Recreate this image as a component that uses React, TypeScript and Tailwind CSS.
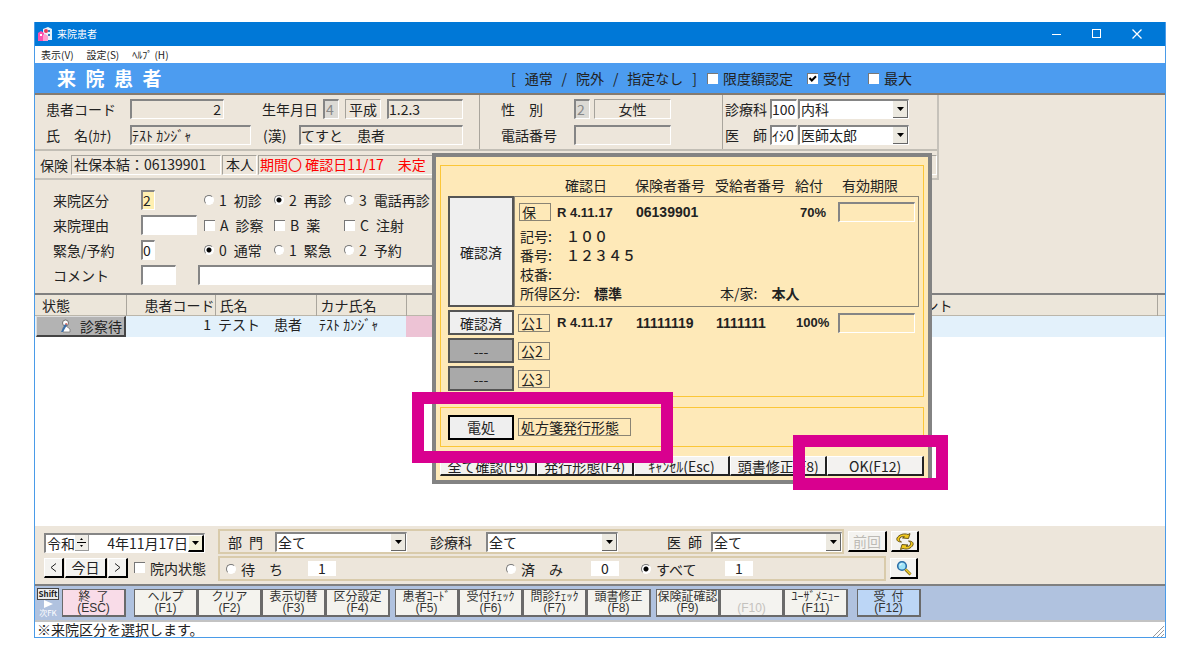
import { useState, type ReactNode } from "react";
import { clsx } from "clsx";

const sunken = "border-t-2 border-l-2 border-r border-b border-t-[#858585] border-l-[#858585] border-r-white border-b-white";
const flat = "border border-t-[#a5a29b] border-l-[#a5a29b] border-r-white border-b-white";
const raised = "border-t border-l border-r-2 border-b-2 border-t-white border-l-white border-r-black border-b-black";

const radioClass =
  "h-[10px] w-[10px] shrink-0 appearance-none rounded-full border border-t-[#777] border-l-[#777] border-r-white border-b-white bg-white checked:bg-[radial-gradient(circle,#000_2px,#fff_3px)]";

interface FieldProps {
  label?: string;
  value?: string;
  className?: string;
  id?: string;
  thin?: boolean;
}

function Field({ label, value, className, id, thin }: FieldProps) {
  return (
    <input
      id={id}
      aria-label={label}
      defaultValue={value}
      className={clsx("h-5 min-w-0 shrink-0 rounded-none pb-px outline-none", thin ? flat : sunken, className)}
    />
  );
}

function Select({ label, options, className }: { label: string; options: string[]; className?: string }) {
  return (
    <div className={clsx("relative h-5 shrink-0 bg-white", sunken, className)}>
      <select aria-label={label} className="block h-full w-full appearance-none bg-transparent pl-px leading-[17px] outline-none">
        {options.map((o) => (
          <option key={o}>{o}</option>
        ))}
      </select>
      <span className="pointer-events-none absolute top-0 right-0 flex h-full w-[15px] items-center justify-center border-r border-b border-[#666] bg-[#ece9e0]">
        <svg width="7" height="4" viewBox="0 0 7 4">
          <path d="M0 0h7L3.5 4z" fill="#000" />
        </svg>
      </span>
    </div>
  );
}

function Check({ label, checked, className }: { label: string; checked?: boolean; className?: string }) {
  return (
    <label className={clsx("flex shrink-0 items-center gap-[5px] whitespace-nowrap", className)}>
      <span className="relative h-[11px] w-[11px] shrink-0">
        <input
          type="checkbox"
          defaultChecked={checked}
          className="peer block h-[11px] w-[11px] appearance-none border-t border-l border-t-[#777] border-l-[#777] bg-white"
        />
        <svg
          className="pointer-events-none absolute inset-0 hidden peer-checked:block"
          width="11"
          height="11"
          viewBox="0 0 11 11"
          fill="none"
          stroke="#000"
          strokeWidth="2"
        >
          <path d="M2.5 5l2.3 2.5L9 3.2" />
        </svg>
      </span>
      {label}
    </label>
  );
}

function Radio({ name, label, checked, className }: { name: string; label: string; checked?: boolean; className?: string }) {
  return (
    <label className={clsx("flex shrink-0 items-center gap-[5px] whitespace-nowrap", className)}>
      <input type="radio" name={name} defaultChecked={checked} className={radioClass} />
      {label}
    </label>
  );
}

function RaisedButton({ children, className, label }: { children: ReactNode; className?: string; label?: string }) {
  return (
    <button aria-label={label} className={clsx("flex shrink-0 items-center justify-center bg-[#f4f3f0] whitespace-nowrap", raised, className)}>
      {children}
    </button>
  );
}

/* ── Title bar, menu and banner ── */
const modes = ["[", "通常", "/", "院外", "/", "指定なし", "]"];

function TitleBar() {
  return (
    <header>
      <div className="flex h-6 items-center bg-[#0078d7] pr-2 pl-[3px] text-white">
        <svg width="15" height="14" viewBox="0 0 15 14">
          <path d="M5 2l5-2 4 2v11H5z" fill="#e8f4fb" />
          <path d="M10 3h2v2h-2zM10 7h2v2h-2z" fill="#3d7fb8" />
          <circle cx="8" cy="4" r="2" fill="#e8385a" />
          <path d="M0 6l3-2 3 2v8H0z" fill="#ff4fae" />
          <path d="M5 8l2-1 3 2v5H5z" fill="#ff9fd0" />
          <path d="M2 7h2v2H2z" fill="#fff" />
        </svg>
        <h1 className="ml-1 text-[10px]">来院患者</h1>
        <div className="ml-auto flex">
          <button aria-label="最小化" className="flex h-6 w-10 items-center justify-center">
            <svg width="10" height="10" stroke="#fff">
              <path d="M0 5.5h9" />
            </svg>
          </button>
          <button aria-label="最大化" className="flex h-6 w-10 items-center justify-center">
            <svg width="10" height="10" stroke="#fff" fill="none">
              <rect x=".5" y=".5" width="8" height="8" />
            </svg>
          </button>
          <button aria-label="閉じる" className="flex h-6 w-10 items-center justify-center">
            <svg width="10" height="10" stroke="#fff" strokeWidth="1.3">
              <path d="M.5 .5l9 9M9.5 .5l-9 9" />
            </svg>
          </button>
        </div>
      </div>
      <nav className="flex h-[17px] items-center gap-[13px] bg-white pl-[6px] text-[10px]">
        <button>表示(V)</button>
        <button>設定(S)</button>
        <button>ﾍﾙﾌﾟ (H)</button>
      </nav>
      <div className="flex h-8 items-center border-b-2 border-[#857b70] bg-[#4c9cf0]">
        <h2 className="w-[476px] pl-[22px] text-[19px] font-bold text-white">来&ensp;院&ensp;患&ensp;者</h2>
        <p className="mr-[10px] flex w-[186px] shrink-0 justify-between">
          {modes.map((m, i) => (
            <span key={i}>{m}</span>
          ))}
        </p>
        <Check label="限度額認定" className="w-[100px]" />
        <Check label="受付" checked className="w-[61px]" />
        <Check label="最大" />
      </div>
    </header>
  );
}

/* ── Patient summary ── */
function PatientPanel() {
  return (
    <section className="max-w-[904px] border-r-2 border-b-2 border-[#c6c2ba]">
      <div className="flex h-[56px] border-b-2 border-[#c2beb5]">
        <div className="flex w-[445px] flex-col justify-center gap-[6px] border-r border-[#a9a59d] pl-[11px]">
          <div className="flex items-center">
            <label htmlFor="code" className="w-[84px]">患者コード</label>
            <Field id="code" value="2" className="mr-[38px] w-[94px] pr-[2px] text-right" />
            <label htmlFor="birth" className="w-[61px]">生年月日</label>
            <Field label="元号コード" value="4" className="mr-[6px] w-4 bg-[#dcdad5] pl-px text-[#888]" />
            <Field label="元号" value="平成" thin className="mr-[6px] w-[36px] pl-[3px]" />
            <Field id="birth" value="1.2.3" className="w-[76px]" />
          </div>
          <div className="flex items-center">
            <label htmlFor="kana" className="w-[84px]">氏　名(ｶﾅ)</label>
            <Field id="kana" value="ﾃｽﾄ ｶﾝｼﾞｬ" className="mr-3 w-[121px]" />
            <label htmlFor="kanji" className="w-[36px]">(漢)</label>
            <Field id="kanji" value="てすと　患者" className="w-[164px]" />
          </div>
        </div>
        <div className="flex w-[243px] flex-col justify-center gap-[6px] border-r border-[#a9a59d] pl-[21px]">
          <div className="flex items-center">
            <label htmlFor="sex" className="w-[73px]">性　別</label>
            <Field label="性別コード" value="2" className="mr-1 w-4 bg-[#dcdad5] pl-px text-[#888]" />
            <Field id="sex" value="女性" thin className="w-[77px] text-center" />
          </div>
          <div className="flex items-center">
            <label htmlFor="tel" className="w-[73px]">電話番号</label>
            <Field id="tel" className="w-[97px]" />
          </div>
        </div>
        <div className="flex flex-col justify-center gap-[6px] pl-[2px]">
          <div className="flex items-center">
            <label htmlFor="dept" className="w-[45px]">診療科</label>
            <Field id="dept" value="100" className="mr-px w-[27px] bg-white" />
            <Select label="診療科" options={["内科"]} className="w-[111px]" />
          </div>
          <div className="flex items-center">
            <label htmlFor="doctor" className="w-[45px]">医　師</label>
            <Field id="doctor" value="ｲｼ0" className="mr-px w-[27px] bg-white" />
            <Select label="医師" options={["医師太郎"]} className="w-[111px]" />
          </div>
        </div>
      </div>
      <div className="flex h-[27px] items-center gap-px pl-[5px]">
        <label htmlFor="ins" className="w-[30px]">保険</label>
        <Field id="ins" value="社保本結：06139901" thin className="w-[150px] pl-[2px]" />
        <Field label="本人" value="本人" thin className="w-[35px] pl-[3px]" />
        <Field label="期間" value="期間〇 確認日11/17&#8195;未定" thin className="flex-1 pl-px text-[#ff0000]" />
      </div>
    </section>
  );
}

/* ── Visit form ── */
function VisitForm() {
  return (
    <section className="flex flex-col gap-[5px] pt-[10px] pb-[8px] pl-[18px]">
      <div className="flex h-5 items-center">
        <label htmlFor="kubun" className="w-[88px]">来院区分</label>
        <Field id="kubun" value="2" className="mr-[49px] w-[14px] bg-[#ffefb0]" />
        <Radio name="kubun" label={"1\u2002初診"} className="w-[70px]" />
        <Radio name="kubun" label={"2\u2002再診"} checked className="w-[70px]" />
        <Radio name="kubun" label={"3\u2002電話再診"} />
      </div>
      <div className="flex h-5 items-center">
        <label htmlFor="riyu" className="w-[88px]">来院理由</label>
        <Field id="riyu" className="mr-[7px] w-[56px] bg-white" />
        <Check label={"A\u2002診察"} className="w-[70px]" />
        <Check label={"B\u2002薬"} className="w-[70px]" />
        <Check label={"C\u2002注射"} />
      </div>
      <div className="flex h-5 items-center">
        <label htmlFor="kinkyu" className="w-[88px]">緊急/予約</label>
        <Field id="kinkyu" value="0" className="mr-[49px] w-[14px] bg-white" />
        <Radio name="kinkyu" label={"0\u2002通常"} checked className="w-[70px]" />
        <Radio name="kinkyu" label={"1\u2002緊急"} className="w-[70px]" />
        <Radio name="kinkyu" label={"2\u2002予約"} />
      </div>
      <div className="flex h-5 items-center">
        <label htmlFor="comment" className="w-[88px]">コメント</label>
        <Field id="comment" className="mr-[22px] w-[35px] bg-white" />
        <Field label="コメント内容" className="w-[660px] bg-white" />
      </div>
    </section>
  );
}

const th = "h-[21px] border-r border-[#aaa69d] text-left font-normal";

function PatientTable() {
  return (
    <div className="flex-1 border-t-2 border-[#808080] bg-white">
      <table className="w-full table-fixed border-collapse leading-[17px]">
        <thead className="bg-[#ece6da] shadow-[inset_0_-1px_0_#bbb6aa]">
          <tr>
            <th className={clsx(th, "w-[91px] pl-[7px]")}>状態</th>
            <th className={clsx(th, "w-[89px] text-right")}>患者コード</th>
            <th className={clsx(th, "w-[101px] pl-1")}>氏名</th>
            <th className={clsx(th, "w-[90px] pl-1")}>カナ氏名</th>
            <th className={clsx(th, "w-[240px]")}></th>
            <th className={clsx(th, "w-[246px]")}></th>
            <th className={clsx(th, "pl-1")}>コメント</th>
            <th className="w-2"></th>
          </tr>
        </thead>
        <tbody className="align-top">
          <tr className="bg-[#e3f1fb]">
            <td className="h-[21px] p-0 pl-px">
              <button className="flex h-[21px] w-[90px] items-center justify-end gap-2 border-t border-l border-r-2 border-b-2 border-t-[#ddd] border-l-[#ddd] border-r-[#444] border-b-[#444] bg-[#b3b3b3] pr-[2px]">
                <svg width="14" height="14" viewBox="0 0 14 14">
                  <circle cx="7.5" cy="4" r="3" fill="#fff" stroke="#555" strokeWidth=".8" />
                  <path d="M5 13V8.5l3-1.5 4 3v3z" fill="#fff" stroke="#777" strokeWidth=".8" />
                  <path d="M3 13l4-8 2 1-4 7z" fill="#3a6ea8" />
                  <path d="M7 5l1-1 1.5 1-.5 1z" fill="#c8443a" />
                </svg>
                診察待
              </button>
            </td>
            <td className="pr-1 text-right">1</td>
            <td className="pl-[3px]">テスト　患者</td>
            <td className="pl-[3px]">ﾃｽﾄ ｶﾝｼﾞｬ</td>
            <td className="bg-[#edc3d5]"></td>
            <td></td>
            <td></td>
            <td></td>
          </tr>
        </tbody>
      </table>
    </div>
  );
}

/* ── Filter area under the table ── */
function FilterPanel() {
  const group = "flex h-[25px] items-center border-2 border-[#d9cbab]";
  return (
    <section className="flex h-[60px] shrink-0 items-center gap-[13px] border-b-2 border-[#808080] pl-[9px]">
      <div className="flex w-[161px] shrink-0 flex-col gap-[5px]">
        <div className={clsx("flex h-5 items-center bg-white pl-px", sunken)}>
          <label htmlFor="date">令和</label>
          <button aria-label="元号切替" className="flex h-4 w-[14px] flex-col items-center justify-center border-r border-b border-[#999] bg-[#f0eee8]">
            <svg width="9" height="11" viewBox="0 0 9 11">
              <path d="M3 3l1.5-2L6 3zM3 8l1.5 2L6 8zM0 5h9v1H0z" />
            </svg>
          </button>
          <input id="date" defaultValue="4年11月17日" className="min-w-0 flex-1 text-right outline-none" />
          <button aria-label="カレンダー" className={clsx("flex h-full w-4 items-center justify-center bg-[#f4f1da]", raised)}>
            <svg width="7" height="4" viewBox="0 0 7 4">
              <path d="M0 0h7L3.5 4z" fill="#000" />
            </svg>
          </button>
        </div>
        <div className="flex items-center gap-px whitespace-nowrap">
          <RaisedButton className="h-[20px] w-5" label="前日">
            <svg width="7" height="9" viewBox="0 0 7 9" fill="none" stroke="#222">
              <path d="M6 .5l-5 4 5 4" />
            </svg>
          </RaisedButton>
          <RaisedButton className="h-[20px] w-[42px]">今日</RaisedButton>
          <RaisedButton className="mr-[5px] h-[20px] w-5" label="翌日">
            <svg width="7" height="9" viewBox="0 0 7 9" fill="none" stroke="#222">
              <path d="M1 .5l5 4-5 4" />
            </svg>
          </RaisedButton>
          <Check label="院内状態" />
        </div>
      </div>
      <div className="flex flex-col gap-[2px]">
        <div className="flex items-center gap-1">
          <div className={clsx(group, "w-[626px]")}>
            <span className="w-[55px] pl-[8px]">部&ensp;門</span>
            <Select label="部門" options={["全て"]} className="w-[132px]" />
            <span className="w-[79px] pl-[23px]">診療科</span>
            <Select label="診療科絞り込み" options={["全て"]} className="w-[132px]" />
            <span className="w-[93px] pl-[49px]">医&ensp;師</span>
            <Select label="医師絞り込み" options={["全て"]} className="w-[131px]" />
          </div>
          <RaisedButton className="h-[21px] w-[39px] text-[#bcbab5]">前回</RaisedButton>
          <RaisedButton className="h-[21px] w-7" label="更新">
            <svg width="18" height="17" viewBox="0 0 18 17">
              <g fill="#f0c81e" stroke="#5b4a10" strokeWidth=".9">
                <path d="M1 5C3 1.500 8 0 12 1.500L14 .6 12.500 5.500 6.500 5l2-1.200C6 3.200 3.500 4 3.500 6.500c0 1.500 1 2 2 2.500C2 9 .2 7.500 1 5z" />
                <path d="M17 12c-2 3.500-6 5-10 3.500L4.500 16.500 6 11.500l6 .5-2 1.200c2.500.6 4.500-.2 4.500-2.700 0-1.500-1-2-2-2.500 3.500 0 5.300 1.500 4.500 4z" />
              </g>
            </svg>
          </RaisedButton>
        </div>
        <div className="flex items-center gap-1">
          <div className={clsx(group, "w-[668px]")}>
            <Radio name="list" label="待　ち" className="w-[88px] pl-[6px]" />
            <output className="h-[15px] w-7 bg-white text-center leading-[15px]">1</output>
            <Radio name="list" label="済　み" className="w-[255px] pl-[170px]" />
            <output className="h-[15px] w-7 bg-white text-center leading-[15px]">0</output>
            <Radio name="list" label="すべて" checked className="w-[106px] pl-[22px]" />
            <output className="h-[15px] w-7 bg-white text-center leading-[15px]">1</output>
          </div>
          <RaisedButton className="h-[21px] w-7" label="検索">
            <svg width="16" height="16" viewBox="0 0 16 16">
              <circle cx="6" cy="6" r="4.300" fill="#9fe3f7" stroke="#2b6fa8" strokeWidth="1.600" />
              <path d="M4 5.500C4.300 4.300 5.200 3.800 6.300 3.800" stroke="#fff" fill="none" />
              <path d="M9.500 9.500l5 5" stroke="#7a6410" strokeWidth="2.800" />
              <path d="M9.500 9.300l5 5" stroke="#f2cf2a" strokeWidth="1.400" />
            </svg>
          </RaisedButton>
        </div>
      </div>
    </section>
  );
}

interface FKeyProps {
  name: string;
  code: string;
  tone?: string;
}

const fkeys: FKeyProps[][] = [
  [
    { name: "ヘルプ", code: "(F1)" },
    { name: "クリア", code: "(F2)" },
    { name: "表示切替", code: "(F3)" },
    { name: "区分設定", code: "(F4)" },
  ],
  [
    { name: "患者ｺｰﾄﾞ", code: "(F5)" },
    { name: "受付ﾁｪｯｸ", code: "(F6)" },
    { name: "問診ﾁｪｯｸ", code: "(F7)" },
    { name: "頭書修正", code: "(F8)" },
  ],
  [
    { name: "保険証確認", code: "(F9)" },
    { name: "", code: "(F10)", tone: "bg-[#f4f3f0] text-[#c4c2be]" },
    { name: "ﾕｰｻﾞﾒﾆｭｰ", code: "(F11)" },
  ],
  [{ name: "受\u2002付", code: "(F12)", tone: "bg-[#bcd6f6]" }],
];

function FKey({ name, code, tone }: FKeyProps) {
  return (
    <button
      disabled={!name}
      className={clsx(
        "flex h-7 w-16 flex-col items-center justify-end border-t border-l border-r-2 border-b-2 border-[#6a6a6a] whitespace-nowrap",
        tone ?? "bg-[#f4f3ee]",
        name && "text-[#333]"
      )}
    >
      {name && <span>{name}</span>}
      <span className="font-['Liberation_Sans',sans-serif]">{code}</span>
    </button>
  );
}

function FunctionBar() {
  return (
    <footer className="shrink-0">
      <div className="flex h-[34px] items-center gap-[5px] bg-[#b0c2df] pl-[2px] text-xs leading-[13px]">
        <div className="mr-[3px] flex items-center gap-[3px]">
          <div className="flex w-[22px] flex-col items-center text-[8px] leading-[10px]">
            <button className="w-full border border-[#444] bg-[#eee] font-bold">Shift</button>
            <svg width="9" height="8" viewBox="0 0 9 8">
              <path d="M0 0l9 4-9 4z" fill="#fff" />
            </svg>
            <span className="text-white">次FK</span>
          </div>
          <FKey name={"終\u2002了"} code="(ESC)" tone="bg-[#f9dce8]" />
        </div>
        {fkeys.map((keys) => (
          <div key={keys[0].code} className="flex last:ml-1">
            {keys.map((k) => (
              <FKey key={k.code} {...k} />
            ))}
          </div>
        ))}
      </div>
      <div className="flex h-[17px] items-end justify-between border-t-2 border-[#c3c3c3] bg-white">
        <p className="pl-[2px] leading-[15px]">※来院区分を選択します。</p>
        <svg width="14" height="13" viewBox="0 0 14 13" stroke="#999">
          <path d="M2 13L13 2M6 13l7-7M10 13l3-3" />
        </svg>
      </div>
    </footer>
  );
}

/* ── Insurance confirmation dialog ── */
const publicRows = [
  { tag: "公1", date: "R 4.11.17", insurer: "11111119", holder: "1111111", rate: "100%" },
  { tag: "公2" },
  { tag: "公3" },
];

const dialogButtons = ["全て確認(F9)", "発行形態(F4)", "ｷｬﾝｾﾙ(Esc)", "頭書修正(F8)", "OK(F12)"];

function ConfirmDialog({ onClose }: { onClose: () => void }) {
  const date = "shrink-0 font-['Liberation_Sans',sans-serif] text-[13px] font-bold";
  const num = "shrink-0 font-['Liberation_Sans',sans-serif] text-[14px] font-bold";
  const tag = "flex h-[18px] w-8 shrink-0 items-center border border-[#8a8474] pl-[2px]";
  const big = "flex w-[66px] shrink-0 items-center justify-center border-2 border-[#555]";
  return (
    <div
      role="dialog"
      aria-label="保険確認"
      className="absolute top-[131px] left-[397px] w-[500px] border-4 border-[#838383] bg-[#fee9b8] pt-2 pr-1 pb-1 pl-1"
    >
      <div className="border border-[#fbc637] pr-1 pb-[5px] pl-[7px]">
        <div className="flex h-[30px] items-end pb-[2px] pl-[117px]">
          <span className="w-[70px]">確認日</span>
          <span className="w-[80px]">保険者番号</span>
          <span className="w-[80px]">受給者番号</span>
          <span className="w-[47px]">給付</span>
          <span>有効期限</span>
        </div>
        <div className="flex">
          <button className={clsx(big, "bg-[#efefef]")}>確認済</button>
          <div className="flex h-[111px] flex-1 flex-col border border-[#8a8474] pl-1 leading-[19px]">
            <div className="flex h-[30px] items-center">
              <span className={tag}>保</span>
              <span className={clsx(date, "w-[85px] pl-[6px]")}>R 4.11.17</span>
              <span className={clsx(num, "w-[164px]")}>06139901</span>
              <span className={clsx(date, "w-[38px]")}>70%</span>
              <Field label="有効期限" className="w-[77px]" />
            </div>
            <p className="pl-px">記号:　<b className="font-medium">１００</b></p>
            <p className="pl-px">番号:　<b className="font-medium">１２３４５</b></p>
            <p className="pl-px">枝番:</p>
            <p className="flex pl-px">
              <span className="w-[200px]">所得区分:　<b>標準</b></span>
              <span>本/家:　<b>本人</b></span>
            </p>
          </div>
        </div>
        {publicRows.map((r) => (
          <div key={r.tag} className="mt-[3px] flex h-[25px] items-center">
            <button className={clsx(big, "h-full", r.date ? "bg-[#efefef]" : "bg-[#a9a9a9]")}>{r.date ? "確認済" : "---"}</button>
            <span className={clsx(tag, "ml-1")}>{r.tag}</span>
            {r.date && (
              <>
                <span className={clsx(date, "w-[86px] pl-[7px]")}>{r.date}</span>
                <span className={clsx(num, "w-[80px]")}>{r.insurer}</span>
                <span className={clsx(num, "w-[80px]")}>{r.holder}</span>
                <span className={clsx(date, "w-[42px]")}>{r.rate}</span>
                <Field label="公費有効期限" className="w-[77px]" />
              </>
            )}
          </div>
        ))}
      </div>
      <div className="mt-[10px] flex h-10 items-center border border-[#fbc637] pl-[7px]">
        <button className={clsx(big, "h-[25px] border-black bg-[#efefef]")}>電処</button>
        <span className="ml-1 h-[18px] w-[113px] border border-[#8a8474] pl-[2px] leading-4">処方箋発行形態</span>
      </div>
      <div className="mt-[9px] flex">
        {dialogButtons.map((text) => (
          <button
            key={text}
            onClick={onClose}
            className="h-[20px] flex-1 border-t border-l border-r-2 border-b-2 border-t-white border-l-white border-r-[#222] border-b-[#222] bg-[#f3f2f0] leading-4 whitespace-nowrap"
          >
            {text}
          </button>
        ))}
      </div>
    </div>
  );
}

export default function App() {
  const [open, setOpen] = useState(true);

  return (
    <main className="flex min-h-screen bg-white px-[34px] pt-[22px] pb-[22px] font-['Noto_Sans_CJK_JP',sans-serif] text-[14px] leading-[18px] text-[#222]">
      <div className="relative flex min-w-0 flex-1 flex-col border-x border-b border-[#4a9be8] bg-[#ede6db]">
        <TitleBar />
        <PatientPanel />
        <VisitForm />
        <PatientTable />
        <FilterPanel />
        <FunctionBar />

        {open && <ConfirmDialog onClose={() => setOpen(false)} />}

        {/* highlight frames */}
        <div className="pointer-events-none absolute top-[370px] left-[377px] h-[71px] w-[261px] border-12 border-[#d9008f]" />
        <div className="pointer-events-none absolute top-[413px] left-[758px] h-[55px] w-[155px] border-12 border-[#d9008f]" />
      </div>
    </main>
  );
}
